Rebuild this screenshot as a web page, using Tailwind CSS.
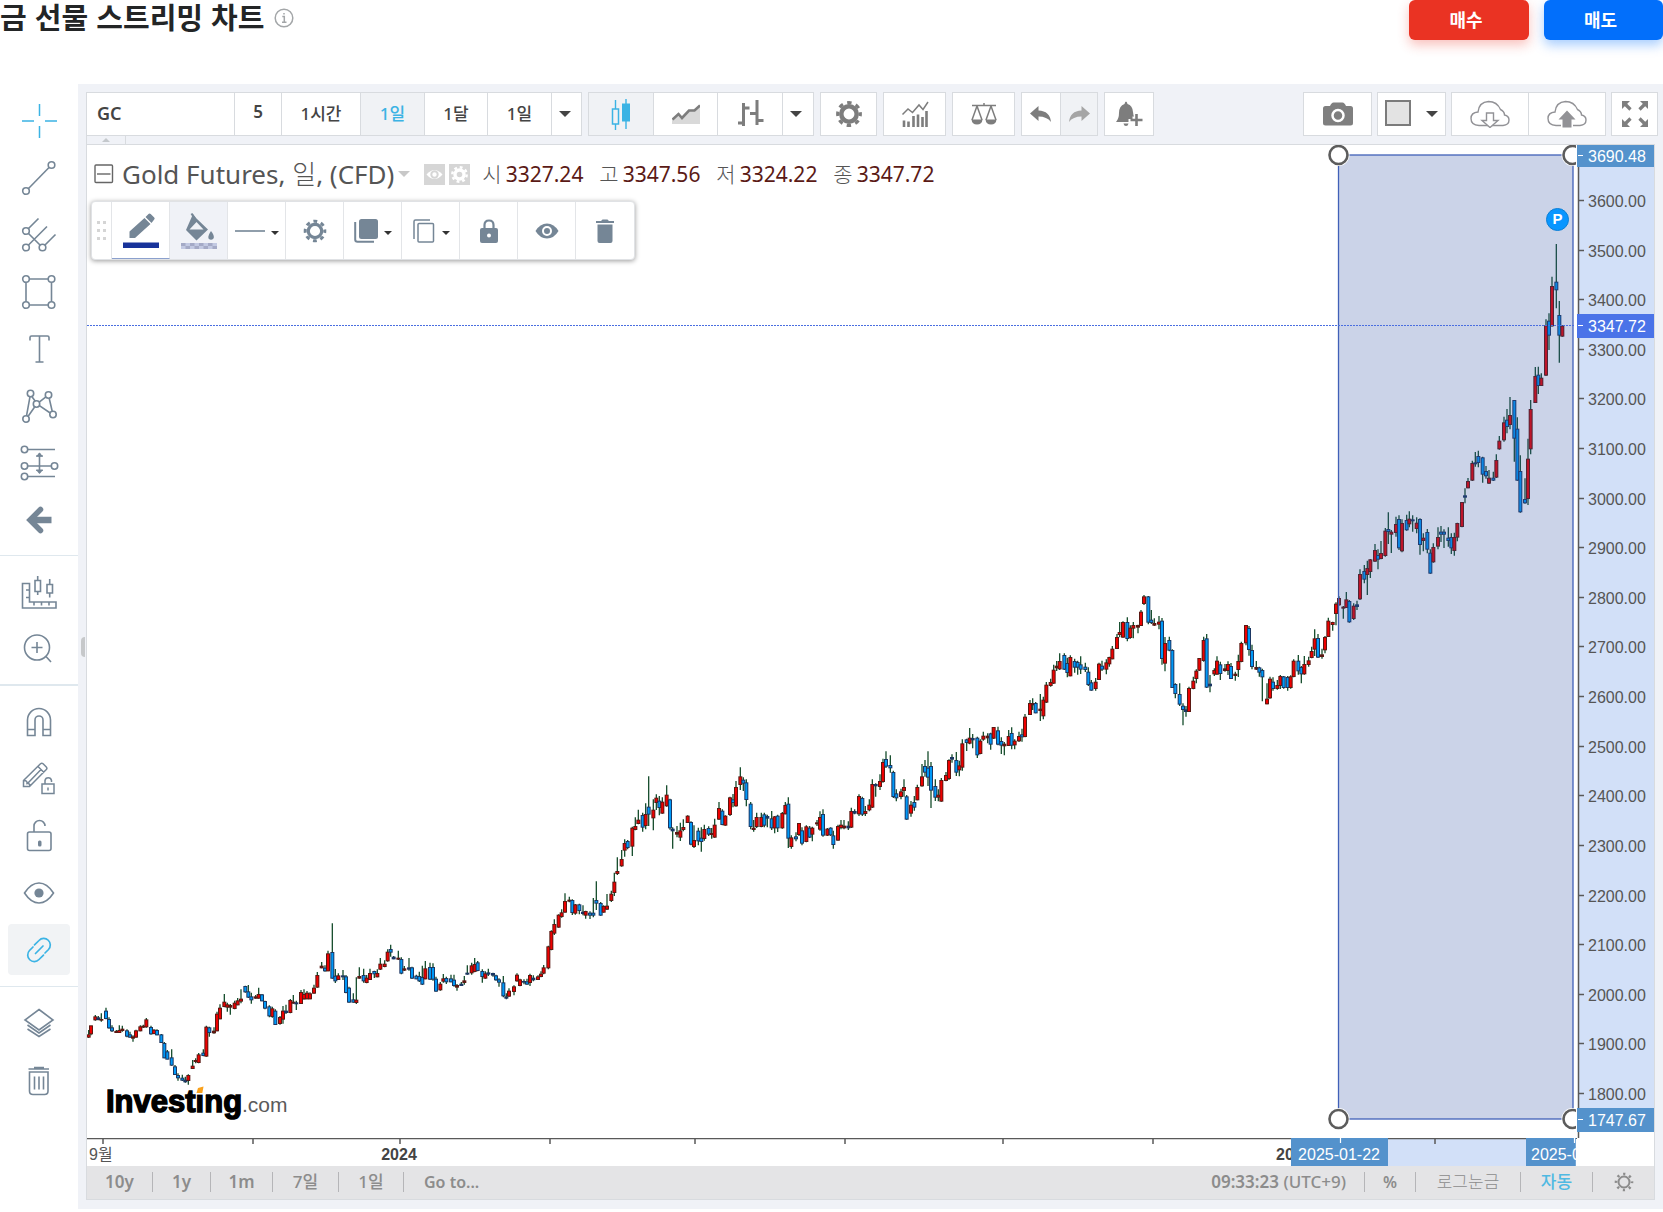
<!DOCTYPE html>
<html lang="ko">

<head>
  <meta charset="UTF-8" />
  <meta name="viewport" content="width=device-width, initial-scale=1.0" />
  <title>금 선물 스트리밍 차트</title>
  <script src="https://cdn.jsdelivr.net/npm/@tailwindcss/browser@4"></script>
</head>

<body class="bg-white font-['Noto_Sans','Noto_Sans_CJK_KR',sans-serif] text-[#4a4a4a]">
  <!-- Header -->
  <header class="flex h-[84px] items-start justify-between overflow-hidden">
    <div class="flex items-center gap-2.5">
      <h1 class="font-['Noto_Sans_CJK_KR',sans-serif] text-[29px] leading-8 font-bold text-[#232526]">금 선물 스트리밍 차트</h1>
      <svg class="mt-1 h-5 w-5 text-[#a3a6a8]" viewBox="0 0 20 20" fill="none" stroke="currentColor" stroke-width="1.5">
        <circle cx="10" cy="10" r="8.8" />
        <path d="M8.3 8.5h2v5.5M8 14.2h4.5M10 5v1.6" />
      </svg>
    </div>
    <div class="flex gap-[15px]">
      <button type="button" class="h-10 w-[120px] rounded-md bg-[#ea3323] pr-1.5 text-lg leading-5 font-bold text-white shadow-[0_5px_12px_rgba(234,51,35,0.3)]">매수</button>
      <button type="button" class="h-10 w-[119px] rounded-md bg-[#026ffb] pr-1.5 text-lg leading-5 font-bold text-white shadow-[0_5px_12px_rgba(2,111,251,0.35)]">매도</button>
    </div>
  </header>

  <div class="flex">
    <!-- Drawing tools -->
    <aside class="w-[78px] shrink-0 text-[#758696]">
      <div class="border-b border-[#dfe8ee] pt-2 pb-[7px]">
        <button type="button" aria-label="Crosshair" class="flex h-[57px] w-full items-center justify-center text-[#3bb3e4]">
          <svg class="h-9 w-9" viewBox="0 0 36 36" fill="none" stroke="currentColor" stroke-width="1.5"><path d="M18.5 1v12M18.5 23v12M1 18h12M24 18h12" /></svg>
        </button>
        <button type="button" aria-label="Trend line" class="flex h-[57px] w-full items-center justify-center">
          <svg class="h-9 w-9" viewBox="0 0 36 36" fill="none" stroke="currentColor" stroke-width="1.6"><circle cx="5" cy="31" r="3.3" /><circle cx="30.500" cy="5" r="3.3" /><path d="M7.500 28.500l20.500-21" /></svg>
        </button>
        <button type="button" aria-label="Pitchfork" class="flex h-[57px] w-full items-center justify-center">
          <svg class="h-9 w-9" viewBox="0 0 36 36" fill="none" stroke="currentColor" stroke-width="1.6"><circle cx="5" cy="14" r="3.3" /><circle cx="5" cy="30.500" r="3.3" /><circle cx="21.500" cy="30.500" r="3.3" /><path d="M7.500 11.500l10-10M7.500 16.500l11.500 11.500M7.500 28L26 9.500M24 28l10.500-10.500" /></svg>
        </button>
        <button type="button" aria-label="Rectangle" class="flex h-[57px] w-full items-center justify-center">
          <svg class="h-9 w-9" viewBox="0 0 36 36" fill="none" stroke="currentColor" stroke-width="1.6"><circle cx="5" cy="5" r="3.3" /><circle cx="30.500" cy="5" r="3.3" /><circle cx="5" cy="31" r="3.3" /><circle cx="30.500" cy="31" r="3.3" /><path d="M8.500 5H27M8.500 31H27M5 8.500V27.500M30.500 8.500V27.500" /></svg>
        </button>
        <button type="button" aria-label="Text" class="flex h-[57px] w-full items-center justify-center">
          <svg class="h-9 w-9" viewBox="0 0 36 36" fill="none" stroke="currentColor" stroke-width="1.6"><path d="M9 9.500V6.500q0-1.500 1.500-1.500h16q1.500 0 1.500 1.500v3M18.500 5v26M14.500 31h8" /></svg>
        </button>
        <button type="button" aria-label="XABCD pattern" class="flex h-[57px] w-full items-center justify-center">
          <svg class="h-9 w-9" viewBox="0 0 36 36" fill="none" stroke="currentColor" stroke-width="1.6"><circle cx="9.500" cy="5.500" r="3.200" /><circle cx="27.500" cy="7" r="3.200" /><circle cx="15.500" cy="16" r="3.200" /><circle cx="5" cy="31" r="3.200" /><circle cx="32" cy="26.500" r="3.200" /><path d="M9 8.700L5.500 27.800M10.800 8.500l3.500 4.700M13.800 18.800L7 28.500M18.200 14.200l6.700-5.300M18.400 17.600L29.200 25M28.200 10.200L31.200 23.300" /></svg>
        </button>
        <button type="button" aria-label="Long position" class="flex h-[57px] w-full items-center justify-center">
          <svg class="h-9 w-10" viewBox="0 0 40 36" fill="none" stroke="currentColor" stroke-width="1.6"><circle cx="5.500" cy="4.500" r="3.200" /><circle cx="5.500" cy="21" r="3.200" /><circle cx="35.500" cy="21" r="3.200" /><circle cx="5.500" cy="31.500" r="3.200" /><path d="M9 4.500h27M9 21h23M9 31.500h27M20.500 8v20" /><path d="M17 11.500l3.500-4 3.500 4zM17 25l3.500 4 3.500-4z" fill="currentColor" stroke="none" /><path d="M17.200 11h6.600M17.200 25.200h6.600" /></svg>
        </button>
        <button type="button" aria-label="Back" class="flex h-[57px] w-full items-center justify-center">
          <svg class="h-7 w-7" viewBox="0 0 28 28" fill="none" stroke="currentColor" stroke-width="5.500"><path d="M15.500 3.500L5 14l10.500 10.500" stroke-linecap="round" /><path d="M7 14h19.500" stroke-width="6.500" /></svg>
        </button>
      </div>
      <div class="border-b-2 border-[#dfe8ee] pt-[7px] pb-[7px]">
        <button type="button" aria-label="Measure" class="flex h-[57px] w-full items-center justify-center">
          <svg class="h-9 w-9" viewBox="0 0 36 36" fill="none" stroke="currentColor" stroke-width="1.600"><path d="M1.500 9.500h7V28H35v6H1.500zM5 16h3.500M5 23.500h3.500M13 28v3.500M20.500 28v3.500M28 28v3.500M14 6.500h5.500v11H14zM16.700 2v4.500M16.700 17.500v3.500M26 10.500h5.500V19H26zM28.700 5v5.500M28.700 19v4.500" /></svg>
        </button>
        <button type="button" aria-label="Zoom in" class="flex h-[57px] w-full items-center justify-center">
          <svg class="h-8 w-8" viewBox="0 0 32 32" fill="none" stroke="currentColor" stroke-width="1.600"><circle cx="14" cy="14.500" r="12.500" /><path d="M14 9v11M8.500 14.500h11M23 23.500l5 5.500" /></svg>
        </button>
      </div>
      <div class="border-b border-[#dfe8ee] pt-[7px] pb-2">
        <button type="button" aria-label="Magnet" class="flex h-[57px] w-full items-center justify-center">
          <svg class="h-8 w-8" viewBox="0 0 32 32" fill="none" stroke="currentColor" stroke-width="1.600"><path d="M4.500 29.500V14a11.500 11.500 0 0123 0v15.500h-7.500V14a4 4 0 00-8 0v15.500zM4.500 23.500H12M20 23.500h7.500" /></svg>
        </button>
        <button type="button" aria-label="Stay in drawing mode" class="flex h-[57px] w-full items-center justify-center">
          <svg class="h-9 w-9" viewBox="0 0 36 36" fill="none" stroke="currentColor" stroke-width="1.500"><path d="M2.500 19.500L19.500 2.800q1.300-1.200 2.600 0l3.200 3.200q1.200 1.300 0 2.600L8.500 25.500h-6zM3 19.500q3.500 0 3 3 3-.500 2.800 2.500M17 5.500l6 6M6.500 22.500L20 8.500" /><path d="M21 23h12v9.500H21zM24 23v-3.500a3.300 3.300 0 016.500 0V21M27 26.500v3" /></svg>
        </button>
        <button type="button" aria-label="Lock all drawings" class="flex h-[57px] w-full items-center justify-center">
          <svg class="h-9 w-9" viewBox="0 0 36 36" fill="none" stroke="currentColor" stroke-width="1.600"><rect x="6.500" y="14" width="23.500" height="18.500" rx="2" /><path d="M13 14V8a5.500 5.500 0 0111 0" /><rect x="17" y="22.500" width="3.500" height="6" rx="1.500" fill="currentColor" stroke="none" /></svg>
        </button>
        <button type="button" aria-label="Hide all drawings" class="flex h-[57px] w-full items-center justify-center">
          <svg class="h-8 w-8" viewBox="0 0 32 32" fill="none" stroke="currentColor" stroke-width="1.600"><path d="M1.500 16Q8 6 16 6t14.500 10Q24 26 16 26T1.500 16z" /><circle cx="16" cy="16" r="4.600" fill="currentColor" stroke="none" /></svg>
        </button>
        <button type="button" aria-label="Link" class="mx-2 my-[3px] flex h-[51px] w-[62px] items-center justify-center rounded-sm bg-[#f1f3f5] text-[#3bb3e4]">
          <svg class="h-7 w-7" viewBox="0 0 28 28" fill="none" stroke="currentColor" stroke-width="1.700" stroke-linecap="round"><path d="M9.500 8.800L14 4.500a6.300 6.300 0 019.500 9L20 17" /><path d="M18.500 19.200L14 23.500a6.300 6.300 0 01-9.500-9L8 11" /><path d="M10.500 17.500l7.500-7.500" /></svg>
        </button>
      </div>
      <div class="pt-2">
        <button type="button" aria-label="Object tree" class="flex h-[57px] w-full items-center justify-center">
          <svg class="h-8 w-8" viewBox="0 0 32 32" fill="none" stroke="currentColor" stroke-width="1.600"><path d="M16 1.500L30 12 16 22 2 12zM4.500 17L16 25l11.500-8M4.500 21L16 28.500 27.500 21" /></svg>
        </button>
        <button type="button" aria-label="Remove all" class="flex h-[57px] w-full items-center justify-center">
          <svg class="h-8 w-8" viewBox="0 0 32 32" fill="none" stroke="currentColor" stroke-width="1.600"><path d="M6.500 7H25v19q0 3.500-3.500 3.500H10Q6.500 29.500 6.500 26zM5.500 4h20.500M11 2.500h10M11.500 11.500v13M16 11.500v13M20.500 11.500v13" /></svg>
        </button>
      </div>
    </aside>

    <main class="relative min-w-0 flex-1 self-start bg-[#f0f2f7] pt-2 pb-[9px] pl-2">
      <!-- Panel handle -->
      <button type="button" aria-label="Collapse tools" class="absolute top-[553px] left-[3px] h-5 w-1 rounded-l-full bg-[#c6c8ca]"></button>

      <!-- Top toolbar -->
      <div class="flex h-11 items-stretch justify-between pr-[5px] text-[17px] leading-6 font-medium text-[#444]">
        <div class="flex gap-1.5">
          <div class="flex divide-x divide-[#d8dbdf] border border-[#d8dbdf] bg-white">
            <input type="text" aria-label="Symbol" value="GC" class="w-[148px] pr-2 pb-0.5 pl-2.5 text-lg font-semibold text-[#444] outline-none" />
            <button type="button" class="w-[47px] pb-1 font-semibold">5</button>
            <button type="button" class="w-[79px]">1시간</button>
            <button type="button" class="w-16 bg-[#f0f2f5] text-[#3bb3e4]">1일</button>
            <button type="button" class="w-[63px]">1달</button>
            <button type="button" class="w-16">1일</button>
            <button type="button" aria-label="Intervals" class="flex w-[29px] items-center justify-center pr-1"><svg class="h-2 w-3" viewBox="0 0 12 8"><path d="M0 1h12L6 7z" fill="#444" /></svg></button>
          </div>
          <div class="flex divide-x divide-[#d8dbdf] border border-[#d8dbdf] bg-white text-[#7d7d7d]">
            <button type="button" aria-label="Candles" class="flex w-[65px] items-center justify-center bg-[#f0f2f5] text-[#3bb3e4]">
              <svg class="h-8 w-6" viewBox="0 0 24 32"><path d="M6.500 2v30M17 1v30" stroke="currentColor" stroke-width="1.400" /><rect x="3.500" y="11" width="6" height="15" fill="#f0f2f5" stroke="currentColor" stroke-width="1.500" /><rect x="13" y="5.500" width="8" height="18" fill="currentColor" /></svg>
            </button>
            <button type="button" aria-label="Area" class="flex w-16 items-center justify-center">
              <svg class="h-5 w-7" viewBox="0 0 28 20"><path d="M0 15l6-6 4 5 7-8 5-.500 6-5V20H0z" fill="#d9d9d9" /><path d="M.500 15.500L6.500 10l3.500 4L17 6.500h5.500L28 1.500" fill="none" stroke="currentColor" stroke-width="2.600" /></svg>
            </button>
            <button type="button" aria-label="Bars" class="flex w-[65px] items-center justify-center">
              <svg class="h-7 w-7" viewBox="0 0 28 28" fill="none" stroke="currentColor" stroke-width="3"><path d="M7.500 3v23M2 23h5.500M7.500 8h6M21 0v25M14 13.500h7M21 20.500h6.500" /></svg>
            </button>
            <button type="button" aria-label="Chart types" class="flex w-[30px] items-center justify-center pr-1"><svg class="h-2 w-3" viewBox="0 0 12 8"><path d="M0 1h12L6 7z" fill="#444" /></svg></button>
          </div>
          <button type="button" aria-label="Settings" class="flex w-[57px] items-center justify-center border border-[#d8dbdf] bg-white text-[#7d7d7d]">
            <svg class="h-7 w-7" viewBox="0 0 28 28" fill="none" stroke="currentColor"><circle cx="14" cy="14" r="7.700" stroke-width="4.500" /><circle cx="14" cy="14" r="11.300" stroke-width="3.200" stroke-dasharray="4.440 4.440" stroke-dashoffset="2.220" /></svg>
          </button>
          <button type="button" aria-label="Indicators" class="flex w-[63px] items-center justify-center border border-[#d8dbdf] bg-white text-[#7d7d7d]">
            <svg class="h-7 w-7" viewBox="0 0 28 28" fill="none" stroke="currentColor"><path d="M1.500 14.500L7 9l4.500 3.500L18 5l4 4.500L27 2" stroke-width="1.500" /><path d="M3 20.500V27M7.500 21.500V27M12.500 16V27M17 14.500V27M21.500 17V27M25.500 11V27" stroke-width="2.600" /></svg>
          </button>
          <button type="button" aria-label="Compare" class="flex w-[63px] items-center justify-center border border-[#d8dbdf] bg-white text-[#7d7d7d]">
            <svg class="h-6 w-7" viewBox="0 0 28 24" fill="none" stroke="currentColor" stroke-width="1.500"><path d="M2 3.500h24M14 1v2.500M7 4L2 18M7 4l5 14M21 4l-5 14M21 4l5 14" /><path d="M1.500 17.500h11Q12 22.500 7 22.500t-5.500-5zM15.500 17.500h11Q26 22.500 21 22.500t-5.500-5z" fill="currentColor" stroke="none" /></svg>
          </button>
          <div class="flex divide-x divide-[#d8dbdf] border border-[#d8dbdf] bg-white text-[#7d7d7d]">
            <button type="button" aria-label="Undo" class="flex w-[39px] items-center justify-center"><svg class="h-5 w-6" viewBox="0 0 24 20"><path d="M9.500 2v4.500Q21 7 22 18q-4-5.500-12.500-5.500V17L1 9.500z" fill="currentColor" /></svg></button>
            <button type="button" aria-label="Redo" class="flex w-9 items-center justify-center bg-[#f0f2f5] text-[#a5a5a5]"><svg class="h-5 w-6" viewBox="0 0 24 20"><path d="M14.500 2v4.500Q3 7 2 18q4-5.500 12.500-5.500V17L23 9.500z" fill="currentColor" /></svg></button>
          </div>
          <button type="button" aria-label="Add alert" class="flex w-[50px] items-center justify-center border border-[#d8dbdf] bg-white text-[#7d7d7d]">
            <svg class="h-7 w-7" viewBox="0 0 28 28" fill="currentColor"><path d="M11 1.500q1 0 1.500 2.500 5 1.500 5.500 8 .300 3 1 4.500h-1.500V19h-4v3H1q3-3.500 3-9 0-7 5.500-9Q10 1.500 11 1.500zM8.500 23.500h5q-.500 2.500-2.500 2.500t-2.500-2.500z" /><path d="M21.500 14v12M15.500 20h12" stroke="currentColor" stroke-width="2.600" /></svg>
          </button>
        </div>

        <div class="flex gap-[5px] text-[#7f7f7f]">
          <button type="button" aria-label="Snapshot" class="flex w-[69px] items-center justify-center border border-[#d8dbdf] bg-white">
            <svg class="h-6 w-8" viewBox="0 0 32 24"><path d="M3.500 4H8q1.500-3.500 3.500-3.500h9Q22.500.500 24 4h4.500q2.500 0 2.500 2.500V21q0 2.500-2.500 2.500h-25Q1 23.500 1 21V6.500Q1 4 3.500 4z" fill="currentColor" /><circle cx="16" cy="13.500" r="5.500" fill="none" stroke="#fff" stroke-width="2.500" /></svg>
          </button>
          <button type="button" aria-label="Color theme" class="flex w-[69px] items-center justify-center gap-[15px] border border-[#d8dbdf] bg-white">
            <span class="mb-0.5 h-[26px] w-[26px] border-2 border-[#7b7b7b] bg-[#e3e3e3]"></span>
            <svg class="h-2 w-3" viewBox="0 0 12 8"><path d="M0 1h12L6 7z" fill="#444" /></svg>
          </button>
          <div class="flex divide-x divide-[#d8dbdf] border border-[#d8dbdf] bg-white text-[#929296]">
            <button type="button" aria-label="Load chart" class="flex w-[77px] items-center justify-center">
              <svg class="h-7 w-10" viewBox="0 0 40 28"><path d="M9 25.500Q1 25 1 18.500 1 12.500 8 12 9 2 18.500 1.500 27 1.500 30.500 9.500q4 2 4 5.500 4.500 1 4.500 5 0 5-6 5.500z" fill="#fff" stroke="currentColor" stroke-width="1.400" /><path d="M14 12.500h11V19h5l-10 9-10-9h4z" fill="#fff" /><path d="M16.500 13h7v7.500h4.500l-8 7-8-7h4.500z" fill="#fff" stroke="currentColor" stroke-width="1.400" /></svg>
            </button>
            <button type="button" aria-label="Save chart" class="flex w-[76px] items-center justify-center">
              <svg class="h-7 w-10" viewBox="0 0 40 28"><path d="M9 25.500Q1 25 1 18.500 1 12.500 8 12 9 2 18.500 1.500 27 1.500 30.500 9.500q4 2 4 5.500 4.500 1 4.500 5 0 5-6 5.500z" fill="#fff" stroke="currentColor" stroke-width="1.400" /><path d="M14 28v-7H9l11-12 11 12h-5v7z" fill="#fff" /><path d="M15.500 27.500v-8h-4l8.500-9 8.500 9h-4v8z" fill="currentColor" /></svg>
            </button>
          </div>
          <button type="button" aria-label="Fullscreen" class="flex w-[47px] items-center justify-center border border-[#d8dbdf] bg-white">
            <svg class="h-7 w-7" viewBox="0 0 28 28" fill="currentColor" stroke="currentColor"><path d="M1 1h8L1 9zM27 1v8l-8-8zM1 27v-8l8 8zM27 27h-8l8-8z" stroke="none" /><path d="M4 4l5.500 5.500M24 4l-5.500 5.500M4 24l5.500-5.500M24 24l-5.500-5.500" stroke-width="3.200" /></svg>
          </button>
        </div>
      </div>
      <div class="flex h-2 w-10 items-center justify-center border-x border-[#d8dbdf]"><svg class="h-1 w-2" viewBox="0 0 8 4"><path d="M0 4l4-4 4 4z" fill="#c4c8cc" /></svg></div>

      <!-- Chart -->
      <section class="mr-2 border border-[#d8dbdf] bg-white">
        <div class="flex">
          <div class="relative min-w-0 flex-1">
            <svg id="pane" class="block h-[993px] w-full" viewBox="0 0 1490 993" preserveAspectRatio="xMaxYMin slice">
              <g id="candles"></g>
              <rect x="1251.500" y="10" width="234.500" height="964" fill="rgba(47,79,163,0.25)" stroke="#4060b8" stroke-width="1.300" />
              <path d="M0 180.500H1490" stroke="#4a6ee0" stroke-width="1.200" stroke-dasharray="2 1" />
              <path d="M1488.500 0V993" stroke="#fff" stroke-width="3" />
              <g fill="#fff">
                <circle cx="1251.500" cy="10" r="11" /><circle cx="1485.500" cy="10" r="11" /><circle cx="1251.500" cy="974" r="11" /><circle cx="1485.500" cy="974" r="11" />
              </g>
              <g fill="#fff" stroke="#5c5c5c" stroke-width="2.600">
                <circle cx="1251.500" cy="10" r="9" /><circle cx="1485.500" cy="10" r="9" /><circle cx="1251.500" cy="974" r="9" /><circle cx="1485.500" cy="974" r="9" />
              </g>
              <path d="M1489.500 0V993" stroke="#fff" />
              <circle cx="1470.500" cy="74.500" r="11" fill="#0996ff" stroke="#0c7fd6" />
              <text x="1470.500" y="79" text-anchor="middle" font-family="Liberation Sans, sans-serif" font-size="15" font-weight="700" fill="#fff">P</text>
            </svg>

            <!-- Legend -->
            <div class="absolute top-[11px] left-[7px] flex items-center text-[21px] leading-9 whitespace-nowrap text-[#555]">
              <svg class="mr-2 h-5 w-5" viewBox="0 0 20 20" fill="none" stroke="#666" stroke-width="1.400"><rect x="1" y="1" width="17.500" height="17.500" rx="1" /><path d="M3 10h13.500" /></svg>
              <span class="text-[26px] leading-9">Gold Futures, <span class="font-light">일</span>, (CFD)</span>
              <svg class="mr-3.5 ml-1 h-2 w-3" viewBox="0 0 12 8"><path d="M0 1h12L6 7z" fill="#c8c8c8" /></svg>
              <svg class="mr-1 h-[21px] w-[21px]" viewBox="0 0 21 21"><path d="M0 0h21v21H0z" fill="#d6d6d6" /><path d="M2.500 10.500Q10.500 1.500 18.500 10.500 10.500 19.500 2.500 10.500z" fill="#fff" /><circle cx="10.500" cy="10.500" r="3.200" fill="#fff" stroke="#d6d6d6" stroke-width="2" /></svg>
              <svg class="mr-3 h-[21px] w-[21px]" viewBox="0 0 21 21"><path d="M0 0h21v21H0z" fill="#d6d6d6" /><circle cx="10.500" cy="10.500" r="4.500" fill="none" stroke="#fff" stroke-width="3.400" /><circle cx="10.500" cy="10.500" r="7.200" fill="none" stroke="#fff" stroke-width="2.400" stroke-dasharray="2.830 2.830" /></svg>
              <span class="w-[117px] font-light">시<span class="ml-1 font-normal text-[#5b1a16]">3327.24</span></span>
              <span class="w-[117px] font-light">고<span class="ml-1 font-normal text-[#5b1a16]">3347.56</span></span>
              <span class="w-[117px] font-light">저<span class="ml-1 font-normal text-[#5b1a16]">3324.22</span></span>
              <span class="font-light">종<span class="ml-1 font-normal text-[#5b1a16]">3347.72</span></span>
            </div>

            <!-- Drawing properties -->
            <div class="absolute top-14 left-1 flex h-[59px] divide-x divide-[#e3e5e8] rounded-sm border border-[#e0e2e5] bg-white text-[#758696] shadow-[0_1px_5px_rgba(0,0,0,0.4)]">
              <div class="flex w-5 items-center justify-center"><svg class="h-5 w-2.5" viewBox="0 0 10 20"><path d="M0 1.500h3M6 1.500h3M0 9.500h3M6 9.500h3M0 17.500h3M6 17.500h3" stroke="#d5d5d5" stroke-width="3" /></svg></div>
              <button type="button" aria-label="Line color" class="flex w-[58px] items-center justify-center border-b border-b-[#8ba0cd]">
                <svg class="h-9 w-9" viewBox="0 0 36 36"><path d="M6.500 26v-6.500L21.500 6l6 6L12 26zM22.500 5l3-3q1-1 2.200 0l3.500 3.500q1 1 0 2L28.500 11z" fill="currentColor" /><path d="M0 30.500h36V36H0z" fill="#18339a" /></svg>
              </button>
              <button type="button" aria-label="Fill color" class="flex w-[58px] items-center justify-center bg-[#f0f2f7]">
                <svg class="h-9 w-9" viewBox="0 0 36 36"><path d="M12 1l3.500 4.500L27 16.500 15.500 27.500 5 17zM8.500 16.500h14L15.500 9z" fill="currentColor" fill-rule="evenodd" /><path d="M10.500.500l5 8" stroke="currentColor" stroke-width="2" /><path d="M30 18q4 5 2.500 7.500-2.500 2.500-5 0Q26.500 23 30 18z" fill="currentColor" /><path d="M0 30h36v6H0z" fill="#c2c9e2" /><path d="M0 31.500h36" stroke="#a4aac6" stroke-width="3" stroke-dasharray="4.500 4.500" /><path d="M4.500 34.500H36" stroke="#a4aac6" stroke-width="3" stroke-dasharray="4.500 4.500" /></svg>
              </button>
              <button type="button" aria-label="Line style" class="flex w-[58px] items-center justify-center gap-1.5"><svg class="h-1 w-[30px]" viewBox="0 0 30 4"><path d="M0 2h30" stroke="currentColor" stroke-width="1.600" /></svg><svg class="mt-1 h-1 w-2" viewBox="0 0 8 4"><path d="M0 0h8L4 4z" fill="#333" /></svg></button>
              <button type="button" aria-label="Properties" class="flex w-[58px] items-center justify-center">
                <svg class="h-6 w-6" viewBox="0 0 24 24" fill="none" stroke="currentColor"><circle cx="12" cy="12" r="6.700" stroke-width="3.200" /><circle cx="12" cy="12" r="9.800" stroke-width="3" stroke-dasharray="3.850 3.850" stroke-dashoffset="1.920" /></svg>
              </button>
              <button type="button" aria-label="Visual order" class="flex w-[58px] items-center justify-center gap-1.5"><svg class="h-6 w-6" viewBox="0 0 24 24"><rect x="5" y="0" width="19" height="20" rx="2.500" fill="currentColor" /><path d="M1.200 3v17.500q0 2.300 2.300 2.300H20" fill="none" stroke="currentColor" stroke-width="2" /></svg><svg class="mt-1 h-1 w-2" viewBox="0 0 8 4"><path d="M0 0h8L4 4z" fill="#333" /></svg></button>
              <button type="button" aria-label="Clone" class="flex w-[58px] items-center justify-center gap-1.5"><svg class="h-6 w-6" viewBox="0 0 24 24" fill="none" stroke="currentColor" stroke-width="1.500"><rect x="6" y="4.500" width="15.500" height="18.500" rx="1" /><path d="M2 20V2.500Q2 1 3.500 1H18" /></svg><svg class="mt-1 h-1 w-2" viewBox="0 0 8 4"><path d="M0 0h8L4 4z" fill="#333" /></svg></button>
              <button type="button" aria-label="Lock" class="flex w-[58px] items-center justify-center"><svg class="h-6 w-5" viewBox="0 0 20 24"><path d="M5.500 10V6q0-4.500 4.500-4.500T14.500 6v4" fill="none" stroke="currentColor" stroke-width="2.200" /><rect x="1" y="9" width="18" height="15" rx="2" fill="currentColor" /><circle cx="10" cy="16.500" r="2" fill="#fff" /></svg></button>
              <button type="button" aria-label="Hide" class="flex w-[58px] items-center justify-center"><svg class="h-4 w-6" viewBox="0 0 24 16"><path d="M.500 8Q5 .500 12 .500T23.500 8Q19 15.500 12 15.500T.500 8z" fill="currentColor" /><circle cx="12" cy="8" r="4" fill="currentColor" stroke="#fff" stroke-width="2" /></svg></button>
              <button type="button" aria-label="Remove" class="flex w-[58px] items-center justify-center"><svg class="h-6 w-5" viewBox="0 0 20 24"><path d="M1 2h5l1.500-1.500h5L14 2h5v2H1zM2.500 5.500h15V22q0 2-2 2h-11q-2 0-2-2z" fill="currentColor" /></svg></button>
            </div>

            <!-- Watermark -->
            <div class="absolute bottom-4 left-5">
              <svg class="block h-10 w-[190px]" viewBox="0 0 190 40">
                <text x="-1" y="30" font-family="Liberation Sans, sans-serif" font-size="31" font-weight="700" fill="#000" stroke="#000" stroke-width="1.400">Investing</text>
                <path d="M89 3h10v9.500H89z" fill="#fff" />
                <path d="M91 6l5.500-1.500-1.200 6.500h-5.800z" fill="#f9a11b" />
                <text x="135" y="30" font-family="Liberation Sans, sans-serif" font-size="21" fill="#5a5a5a">.com</text>
              </svg>
            </div>
          </div>

          <svg id="price-axis" class="block h-[993px] w-[77px] shrink-0 font-['Liberation_Sans',sans-serif] text-base" viewBox="0 0 77 993">
            <rect x="1" width="76" height="987" fill="#d2e0f8" />
            <path d="M1.500 0V993" stroke="#595959" stroke-width="1.500" />
            <g id="price-ticks"></g>
          </svg>
        </div>

        <!-- Time axis -->
        <div class="flex">
          <svg id="time-axis" class="block h-7 min-w-0 flex-1 font-['Liberation_Sans','Noto_Sans_CJK_KR',sans-serif] text-base" viewBox="0 0 1490 28" preserveAspectRatio="xMaxYMin slice">
            <rect x="1301" width="138" height="28" fill="#d2e0f8" />
            <g id="time-ticks" stroke="#595959" stroke-width="1.500"></g>
            <path d="M0 .500H1490" stroke="#595959" stroke-width="1.500" />
            <text x="2" y="22" fill="#555">9월</text>
            <text x="312" y="22" text-anchor="middle" font-weight="700" fill="#444">2024</text>
            <text x="1189" y="22" font-weight="700" fill="#444">2025</text>
            <rect x="1204" y="0" width="97" height="28" fill="#5492cc" />
            <text x="1252" y="22" text-anchor="middle" fill="#fff">2025-01-22</text>
            <rect x="1439" y="0" width="50" height="28" fill="#5492cc" />
            <text x="1444" y="22" fill="#fff">2025-04-24</text>
            <path d="M1253.500 0v5M1487.500 0v5" stroke="#fff" stroke-width="1.200" />
            <path d="M1489.500 1v27" stroke="#fff" stroke-width="1.400" />
          </svg>
          <div class="h-7 w-[77px] shrink-0"></div>
        </div>

        <!-- Bottom toolbar -->
        <div class="flex h-[33px] items-center justify-between bg-[#e4e4e6] pb-0.5 text-[17px] leading-5 font-semibold text-[#8c8c8c]">
          <div class="flex divide-x divide-[#b5b5b8]">
            <button type="button" class="w-[66px]">10y</button>
            <button type="button" class="w-[58px]">1y</button>
            <button type="button" class="w-[62px]">1m</button>
            <button type="button" class="w-[66px] font-medium">7일</button>
            <button type="button" class="w-[65px] font-medium">1일</button>
            <button type="button" class="w-[100px] pl-5 text-left text-base leading-5">Go to...</button>
          </div>
          <div class="flex divide-x divide-[#b5b5b8]">
            <button type="button" class="px-[18px]">09:33:23 <span class="font-medium">(UTC+9)</span></button>
            <button type="button" class="w-[51px] text-base leading-5">%</button>
            <button type="button" class="w-[105px] font-light">로그눈금</button>
            <button type="button" class="w-[72px] font-medium text-[#4fb9e2]">자동</button>
            <button type="button" aria-label="Chart properties" class="flex w-[61px] items-center justify-center"><svg class="h-5 w-5" viewBox="0 0 20 20" fill="none" stroke="currentColor"><circle cx="10" cy="10" r="5.500" stroke-width="2" /><circle cx="10" cy="10" r="8" stroke-width="2.600" stroke-dasharray="2.200 4.083" stroke-dashoffset="1.100" /></svg></button>
          </div>
        </div>
      </section>
    </main>
  </div>

  <script>
    // Candles by period: x high top bottom low, one unit is a third of a pixel. r = up, b = down
    const periods = [
      { x: -7, y: 735, rows: `r26 450 464 472 474;r33 437 437 462 466;r46 405 410 420 422;b55 408 413 419 421;r64 400 418 421 425;b78 383 393 416 418;b87 412 418 444 446;b96 436 443 453 456;r109 450 454 458 458;r118 436 451 458 458;r127 437 447 452 455;b141 448 452 469 472;b150 455 464 472 473;r159 466 470 475 485;r168 449 452 472 473;r181 436 440 453 454;r190 434 438 442 444;r199 414 419 441 443;b213 437 442 462 464;r222 448 450 461 463;b231 448 451 465 466;b244 462 464 488 489;b253 486 490 534 535;b262 510 515 538 538;b275 508 533 556 557;b285 555 560 584 585;b294 580 586 594 602;b307 584 594 601 603;b316 590 600 606 608;r325 583 586 602 614;r338 540 558 566 566;r347 535 541 545 550;r356 519 524 548 550;b370 508 519 527 529;r379 437 441 529 530;b388 440 443 458 470;r402 442 453 459 461;r411 395 402 453 454;r420 373 384 417 418;r433 342 366 380 382;r442 368 374 382 395;r451 372 376 382 404;r464 362 369 386 388;r473 354 362 375 376;r483 328 357 364 370;b496 317 319 336 338;b505 315 335 352 354;b514 338 350 360 371;r527 345 350 355 356;r536 323 343 355 356;b546 342 344 363 364;b555 362 364 385 388;b568 376 380 408 412;r577 380 386 410 413;b586 388 393 434 435;r600 408 412 431 434;r609 378 393 418 431;b618 374 393 398 402;r631 357 361 398 400;r640 345 366 370 371;b649 362 368 372 390;r663 330 337 371 372;r672 328 343 357 359;r681 333 339 357 358;r690 337 341 357 358;r702 314 324 340 341;r712 276 286 322 323;r725 246 258 264 265;b735 256 264 273 275;r744 212 221 273 274;b757 130 217 295 296;b766 267 288 303 309;r775 280 287 299 300;b789 270 287 291 300;b798 285 290 338 340;b807 320 324 367 368;b820 340 359 367 368;r829 292 360 368 372;r838 262 289 295 296;b851 266 286 303 308;r860 285 294 308 310;r870 266 280 299 300;b883 272 274 282 294;r892 268 280 291 292;r901 234 252 268 270;r914 241 252 260 262;r923 208 216 243 245;b932 194 208 217 230;b941 228 231 237 238;r955 212 234 238 240;b964 232 238 280 283;r973 258 266 271 273;b987 234 263 268 272;b996 260 263 295 297;b1009 284 288 297 298;b1018 275 289 303 306;b1027 257 292 313 315;r1036 243 266 297 298;b1050 248 262 298 300;b1059 250 262 298 302;b1068 290 297 334 335;r1081 306 312 330 332;r1090 282 296 304 308;b1099 290 295 306 312;b1113 284 296 306 307;b1122 284 300 317 320;r1131 312 316 322 332;b1144 306 312 317 318;r1153 288 302 308 314;b1162 256 279 283 284;r1175 248 257 279 284;r1184 234 253 275 277;b1193 243 248 272 274;b1207 268 274 290 308;r1216 274 281 295 296;b1225 266 278 283 288;b1239 278 280 286 290;b1248 284 287 300 302;b1257 295 299 307 320;b1270 288 308 348 352;b1279 340 350 355 358;r1287 325 333 349 350;r1302 316 320 335 346;r1311 280 285 303 305;r1320 296 299 317 319;b1332 298 304 307 313;b1341 296 305 313 314;r1350 281 286 308 318;b1360 286 294 300 304;r1374 286 290 299 300;r1383 274 282 290 292;r1391 255 263 280 283;r1405 197 200 264 268;r1414 151 154 209 211;r1423 118 133 160 165;r1436 103 105 142 143;r1445 88 98 110 113;r1455 40 64 97 98;r1468 50 60 64 67;b1477 58 61 98 105;r1486 72 74 100 104;b1498 71 74 92 103` },
      { x: 413, y: 595, rows: `b249 496 516 521 526;r257 512 514 526 536;b270 514 519 526 537;b280 474 519 526 532;b289 424 481 490 510;b302 486 490 526 527;r311 496 499 517 518;r321 462 498 508 510;r334 452 462 482 486;r343 398 426 458 468;r352 352 394 401 405;r365 330 358 378 380;r374 298 310 331 350;b383 300 304 323 328;r397 260 264 319 348;r406 232 259 269 271;r415 209 240 251 253;b428 218 226 262 275;r437 190 223 257 268;b446 109 201 223 258;r460 178 210 234 271;r469 163 174 188 210;b478 168 183 203 226;r487 172 186 220 221;r500 136 165 198 200;b510 176 179 264 269;b518 262 267 273 326;r531 258 277 283 292;r541 248 272 292 303;r550 238 262 269 274;r563 226 228 248 249;b573 244 247 313 316;r582 256 301 320 324;b595 263 273 303 316;b604 262 294 305 335;r613 254 268 296 302;b626 259 265 283 288;r635 264 280 284 296;r644 236 255 292 293;r657 186 205 238 240;b667 208 213 254 256;r676 226 228 256 257;r690 170 173 224 228;b699 162 179 188 202;r708 123 142 198 200;r721 82 110 134 150;b730 112 120 130 153;b739 118 128 179 199;b752 186 192 260 268;r761 240 264 269 275;r770 218 232 260 264;r784 218 232 260 262;b793 218 224 256 262;b802 224 229 235 262;b815 213 236 264 270;r824 228 230 264 280;b833 224 228 264 276;r847 216 220 264 266;r856 186 196 222 223;b865 172 192 295 324;r874 286 293 320 326;b888 277 290 297 304;r897 249 250 284 288;b906 262 272 310 316;r919 256 260 305 307;b929 258 264 292 294;r937 260 264 283 304;r951 240 248 252 258;r960 214 232 268 272;b969 208 223 286 290;r982 264 267 286 288;b992 262 264 285 288;b1000 272 287 314 326;r1014 254 259 301 302;r1023 240 255 263 268;r1032 240 258 264 268;b1045 244 258 264 270;r1054 203 214 262 264;b1064 208 214 220 223;r1077 163 169 222 228;b1087 170 175 223 228;r1096 198 214 221 228;r1108 178 195 210 214;r1117 118 133 202 204;b1127 130 133 138 170;r1140 103 124 140 150;r1149 56 67 125 128;b1158 34 58 79 84;b1171 46 76 84 98;b1180 92 97 170 174;b1189 148 161 174 184;r1203 146 155 170 178;r1212 118 142 152 170;b1220 165 170 238 239;r1233 183 195 220 230;b1243 168 187 202 212;r1252 134 142 180 181;r1266 72 110 138 140;b1275 60 79 97 110;b1284 34 84 112 138;b1293 66 79 151 204;b1306 118 139 172 183;r1315 148 165 172 184;r1324 114 121 184 185;r1338 96 106 122 124;r1347 58 61 116 120;b1356 43 52 58 68;b1369 36 61 97 108` },
      { x: 813, y: 425, rows: `r178 572 587 600 619;r187 508 521 592 602;b200 506 509 518 543;r209 474 504 520 523;b218 492 505 510 535;b232 500 504 555 564;r241 508 513 551 553;r250 485 498 508 512;r263 490 498 504 520;b272 488 491 523 539;r281 472 472 505 507;b294 470 482 523 526;b304 502 514 526 552;r313 516 522 528 556;r326 480 499 527 528;b335 472 490 526 538;r344 508 513 525 538;r357 485 499 513 516;b366 476 494 501 515;r375 432 441 500 502;r390 390 400 434 435;r398 385 400 405 420;b407 396 400 429 430;r421 372 417 422 453;r430 380 390 438 448;r439 336 345 397 399;r452 326 337 347 350;r461 284 300 340 342;r470 273 288 294 303;r479 250 274 297 300;b493 250 256 298 300;b502 263 280 308 322;r511 256 262 318 319;b524 266 274 292 308;b533 272 277 292 314;b542 259 284 298 312;b556 278 291 299 306;b565 292 306 344 348;b574 330 338 361 362;r587 324 336 356 362;r597 278 282 329 330;b606 272 288 298 303;r619 268 278 298 313;r628 260 262 282 290;r637 228 237 267 268;r651 192 202 236 237;r659 156 187 194 202;r669 154 157 202 203;b682 142 157 206 214;r691 166 174 203 206;r700 156 166 175 205;r714 164 166 172 190;r723 120 126 167 168;r732 75 80 101 105;b745 78 80 157 163;b754 120 150 158 162;r763 145 160 166 168;r777 138 156 163 178;b786 144 153 266 284;r795 201 220 280 304;b808 200 211 241 244;b817 238 241 353 354;b826 340 343 371 385;b839 340 373 403 408;b849 400 408 419 466;b858 408 419 425 440;r867 350 355 425 426;r880 320 333 356 358;r889 298 303 326 340;r898 264 265 301 303;r911 200 211 272 275;b920 192 206 352 354;b930 315 342 348 367;r943 295 301 312 318;r951 259 273 313 314;b961 275 284 311 330;r975 282 296 302 305;r984 274 283 302 315;b993 279 289 326 327;r1006 305 312 317 332;r1015 254 274 299 321;r1024 215 220 275 277;r1038 166 166 219 226;b1047 168 175 239 257;b1056 224 241 290 298;r1069 273 292 298 300;b1078 290 293 307 320;b1087 296 301 321 394;r1101 340 387 402 403;r1110 320 327 384 386;b1119 322 336 356 362;r1132 330 346 356 359;r1141 315 319 347 357;b1151 318 320 353 356;b1163 318 322 353 362;r1172 316 320 353 356;r1181 268 273 320 322;b1195 255 273 303 314;b1204 288 292 312 340;r1213 258 283 312 314;r1226 260 272 284 290;r1235 230 244 263 265;r1244 178 206 238 258;b1254 192 205 262 264;r1266 236 254 260 266;r1275 198 202 240 250;r1285 143 153 200 201;r1298 155 157 164 182;r1308 97 102 131 166` },
      { x: 1213, y: 75, rows: `r117 1129 1135 1155 1157;r130 1158 1161 1165 1196;r139 1116 1139 1163 1164;b148 1140 1144 1206 1208;r161 1150 1158 1196 1200;b171 1142 1154 1160 1170;r180 1048 1063 1137 1140;b193 1035 1054 1078 1090;r202 1022 1045 1064 1125;r211 1017 1019 1055 1074;r225 972 991 1024 1026;b234 988 1006 1018 1048;r243 963 1000 1016 1018;r256 924 933 1007 1010;b265 877 928 935 972;r274 930 936 943 999;r288 890 913 938 950;b297 886 898 984 990;r306 898 910 993 997;b320 884 901 930 932;r328 874 897 912 922;b338 886 899 903 935;r350 892 909 926 940;b360 895 898 974 1004;r370 940 954 962 994;b382 927 937 988 1000;b391 988 999 1060 1061;r400 970 982 1026 1028;r414 922 952 979 988;b423 918 936 943 966;b432 928 936 943 984;b445 922 954 962 980;b454 940 952 984 1002;r463 938 952 992 1007;r472 908 910 952 964;r486 846 847 920 922;b495 805 827 832 850;r504 774 784 804 805;r517 722 730 781 783;b526 696 728 732 740;b535 692 709 728 742;b548 710 713 763 788;b558 738 754 768 776;r567 750 774 790 792;b580 755 774 781 783;r589 703 721 772 774;r598 648 663 687 689;r612 590 608 660 665;b621 567 600 620 640;r630 531 586 614 628;b643 540 541 655 725;b652 592 627 781 782;b661 706 754 876 878;b675 775 838 849 851;r684 656 717 836 855;r692 540 568 687 703;r706 441 469 548 549;b715 440 465 497 522;r724 460 474 497 498;r738 298 317 466 468;b747 280 303 346 390;r756 170 199 318 320;b769 72 186 210 265;b778 243 286 346 428;r787 316 318 349 350` }
    ];

    document.getElementById('candles').innerHTML = periods.map(p => {
      const bars = p.rows.split(';').map(row => {
        const up = row[0] === 'r';
        const [x, high, top, bottom, low] = row.slice(1).split(' ').map(Number);
        const edge = up ? '#5c1812' : '#1b3763';
        let out = `<path d="M${x} ${high}V${low}" stroke="#1a5030" stroke-width="4"/>`;
        out += `<rect x="${x - 6}" y="${top - 1}" width="12" height="${bottom - top + 2}" fill="${edge}"/>`;
        if (bottom - top > 6) {
          out += `<rect x="${x - 3}" y="${top + 2}" width="6" height="${bottom - top - 4}" fill="${up ? '#ee0000' : '#0099f8'}"/>`;
        }
        return out;
      }).join('');
      return `<g transform="translate(${p.x} ${p.y}) scale(${1 / 3})">${bars}</g>`;
    }).join('');

    // Price scale
    const priceY = price => 10 + (3690.48 - price) * 964 / 1942.81;
    let prices = '';
    for (let p = 3600; p >= 1800; p -= 100) {
      const y = Math.round(priceY(p));
      prices += `<path d="M1 ${y + 0.5}h6" stroke="#595959" stroke-width="1.5"/><text x="11" y="${y + 7}" fill="#555">${p.toFixed(2)}</text>`;
    }
    [[3690.48, '#5492cc', 0, 22], [3347.72, '#4a73e8', 169, 24], [1747.67, '#5492cc', 963, 24]].forEach(([p, color, top, height]) => {
      const y = Math.round(priceY(p));
      prices += `<rect x="0" y="${top}" width="77" height="${height}" fill="${color}"/><path d="M1 ${y + 0.5}h5" stroke="#fff"/><text x="11" y="${y + 7}" fill="#fff">${p.toFixed(2)}</text>`;
    });
    document.getElementById('price-ticks').innerHTML = prices;

    // Month ticks
    document.getElementById('time-ticks').innerHTML = [16, 166, 313, 463, 608, 758, 916, 1066, 1348]
      .map(x => `<path d="M${x} 0v6"/>`).join('');
  </script>
</body>

</html>
